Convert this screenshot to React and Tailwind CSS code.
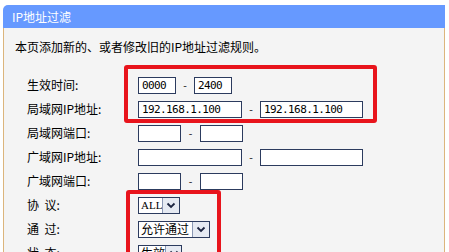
import React from 'react';

const cjk = { fontFamily: '"Noto Sans CJK SC", "Liberation Sans", sans-serif' };
const mono = { fontFamily: '"DejaVu Sans Mono", "Liberation Mono", monospace' };

const Box = ({ w, value }) => (
  <div
    className={`${w} h-[17px] bg-white border border-[#2c3b5e] flex items-center px-[3px] text-[11px] tracking-[-0.6px] text-black leading-none whitespace-nowrap overflow-hidden`}
    style={mono}
  >
    {value}
  </div>
);

const Dash = ({ w }) => (
  <div className={`${w} flex justify-center text-[11px] text-[#333]`}>-</div>
);

const Chevron = () => (
  <span className="w-[17px] shrink-0 h-full bg-[#e6eaf2] border-l border-[#8b98b4] flex items-center justify-center">
    <svg width="10" height="7" viewBox="0 0 10 7">
      <path d="M1.5 1.5 L5 5 L8.5 1.5" fill="none" stroke="#1c2440" strokeWidth="1.8" />
    </svg>
  </span>
);

const Select = ({ w, children, serif }) => (
  <div className={`${w} h-[17px] bg-white border border-[#2c3b5e] flex items-stretch overflow-hidden`}>
    <span
      className="flex-1 flex items-center pl-[2px] text-[12px] leading-none text-black whitespace-nowrap"
      style={serif ? { fontFamily: '"Liberation Serif", serif', fontSize: 11 } : cjk}
    >
      {children}
    </span>
    <Chevron />
  </div>
);

const Row = ({ label, children }) => (
  <div className="flex items-center h-[24px]">
    <div className="w-[111px] text-[12px] text-black leading-none whitespace-pre" style={cjk}>{label}</div>
    <div className="flex items-center">{children}</div>
  </div>
);

export default function App() {
  return (
    <div className="w-[449px] h-[252px] overflow-hidden bg-white pt-[5px]">
      <div className="ml-[3px] w-[442px]">
        <div className="h-[23px] bg-[#6699ff] rounded-tl-[5px] flex items-center pl-[9px] text-white text-[12px]" style={cjk}>
          IP地址过滤
        </div>
        <div className="relative h-[230px] bg-[#f4f4f4] border-l border-r border-[#dcb57c] pt-[12px]">
          <p className="pl-[11px] text-[12px] leading-[14px] text-black" style={cjk}>
            本页添加新的、或者修改旧的IP地址过滤规则。
          </p>

          <div className="mt-[19px] pl-[23px]">
            <Row label="生效时间:">
              <Box w="w-[38px]" value="0000" />
              <Dash w="w-[18px]" />
              <Box w="w-[38px]" value="2400" />
            </Row>
            <Row label="局域网IP地址:">
              <Box w="w-[104px]" value="192.168.1.100" />
              <Dash w="w-[18px]" />
              <Box w="w-[103px]" value="192.168.1.100" />
            </Row>
            <Row label="局域网端口:">
              <Box w="w-[43px]" />
              <Dash w="w-[19px]" />
              <Box w="w-[43px]" />
            </Row>
            <Row label="广域网IP地址:">
              <Box w="w-[104px]" />
              <Dash w="w-[18px]" />
              <Box w="w-[103px]" />
            </Row>
            <Row label="广域网端口:">
              <Box w="w-[43px]" />
              <Dash w="w-[19px]" />
              <Box w="w-[43px]" />
            </Row>
            <Row label="协  议:">
              <Select w="w-[42px]" serif>ALL</Select>
            </Row>
            <Row label="通  过:">
              <Select w="w-[72px]">允许通过</Select>
            </Row>
            <Row label="状  态:">
              <Select w="w-[44px]">生效</Select>
            </Row>
          </div>

          {/* red highlight annotations */}
          <div className="absolute left-[120px] top-[37px] w-[253px] h-[58px] border-[4px] border-[#e8141c] rounded-[3px]" />
          <div className="absolute left-[122px] top-[162px] w-[95px] h-[80px] border-[4px] border-[#e8141c] rounded-[3px]" />
        </div>
      </div>
    </div>
  );
}
